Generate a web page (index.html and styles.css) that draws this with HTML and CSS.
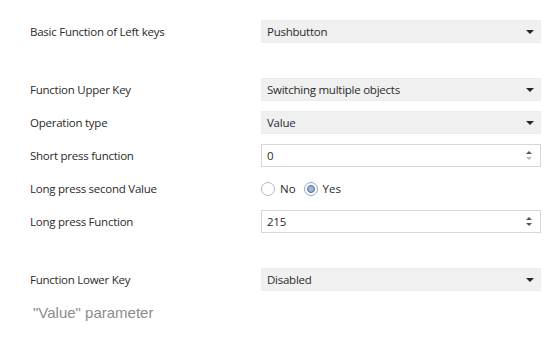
FILE: index.html
```html
<!DOCTYPE html>
<html>
<head>
<meta charset="utf-8">
<link rel="stylesheet" href="styles.css">
</head>
<body>
<div class="page">
  <div class="form">
    <div class="row">
      <div class="label">Basic Function of Left keys</div>
      <div class="select"><span>Pushbutton</span><i class="caret"></i></div>
    </div>
    <div class="spacer"></div>
    <div class="row">
      <div class="label">Function Upper Key</div>
      <div class="select"><span>Switching multiple objects</span><i class="caret"></i></div>
    </div>
    <div class="row">
      <div class="label">Operation type</div>
      <div class="select"><span>Value</span><i class="caret"></i></div>
    </div>
    <div class="row">
      <div class="label">Short press function</div>
      <div class="number"><span>0</span><div class="spin"><i class="up"></i><i class="down dim"></i></div></div>
    </div>
    <div class="row">
      <div class="label">Long press second Value</div>
      <div class="radios">
        <label class="radio"><i class="dot"></i><span>No</span></label>
        <label class="radio on"><i class="dot"></i><span>Yes</span></label>
      </div>
    </div>
    <div class="row">
      <div class="label">Long press Function</div>
      <div class="number"><span>215</span><div class="spin"><i class="up"></i><i class="down"></i></div></div>
    </div>
    <div class="spacer"></div>
    <div class="row">
      <div class="label">Function Lower Key</div>
      <div class="select"><span>Disabled</span><i class="caret"></i></div>
    </div>
  </div>
  <div class="caption">"Value" parameter</div>
</div>
</body>
</html>
```

FILE: styles.css
```css
html, body {
  margin: 0;
  padding: 0;
  background: #ffffff;
}
.page {
  width: 560px;
  height: 342px;
  padding: 20px 0 0 30px;
  box-sizing: border-box;
  font-family: "Open Sans", "Noto Sans", sans-serif;
  color: #2a2a2a;
}
.form {
  display: flex;
  flex-direction: column;
  gap: 10px;
}
.spacer {
  height: 15px;
}
.row {
  display: grid;
  grid-template-columns: 231px 280px;
  height: 23px;
  align-items: center;
}
.label {
  font-size: 11.5px;
  letter-spacing: -0.25px;
}
.select, .number {
  height: 23px;
  box-sizing: border-box;
  display: flex;
  align-items: center;
  justify-content: space-between;
  padding: 0 6px 0 5px;
  font-size: 11.5px;
  letter-spacing: -0.25px;
}
.select {
  background: #f0f0f0;
  border: 1px solid #ececec;
}
.number {
  background: #ffffff;
  border: 1px solid #d6d6d6;
  padding-right: 8px;
}
.caret {
  width: 0;
  height: 0;
  border-left: 4px solid transparent;
  border-right: 4px solid transparent;
  border-top: 4px solid #262626;
}
.spin {
  display: flex;
  flex-direction: column;
  gap: 3px;
}
.spin i {
  width: 0;
  height: 0;
  border-left: 3px solid transparent;
  border-right: 3px solid transparent;
}
.spin .up {
  border-bottom: 3px solid #555;
}
.spin .down {
  border-top: 3px solid #555;
}
.spin .down.dim {
  border-top-color: #b8b8b8;
}
.radios {
  display: flex;
  align-items: center;
  gap: 8px;
  font-size: 11.5px;
}
.radio {
  display: flex;
  align-items: center;
  gap: 5px;
}
.dot {
  width: 14px;
  height: 14px;
  box-sizing: border-box;
  border-radius: 50%;
  border: 1px solid #b9b9b9;
  background: #fff;
  display: flex;
  align-items: center;
  justify-content: center;
}
.radio.on .dot {
  border-color: #8fa6c8;
}
.radio.on .dot::after {
  content: "";
  width: 8px;
  height: 8px;
  box-sizing: border-box;
  border-radius: 50%;
  background: #9fb3d2;
  border: 1px solid #4d6a9c;
}
.caption {
  margin-top: 13px;
  padding-left: 3px;
  font-family: "Liberation Sans", Arial, sans-serif;
  font-size: 15px;
  color: #8c8c8c;
}
```
